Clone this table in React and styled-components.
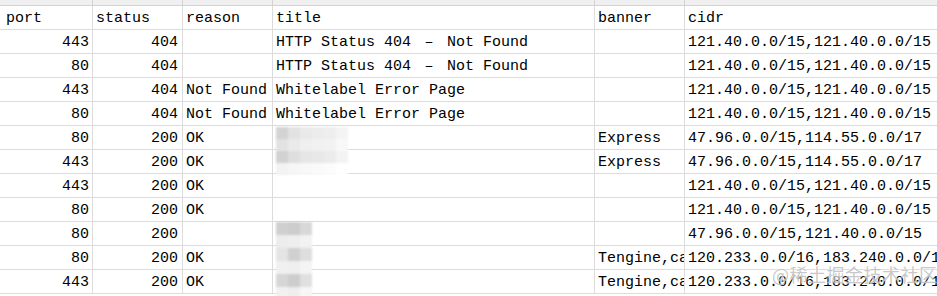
import React from 'react'
import styled, {createGlobalStyle} from 'styled-components'

const GlobalStyle = createGlobalStyle`
    html, body {
        margin: 0;
        padding: 0;
        background: #ffffff;
        overflow: hidden;
    }
`;

const Sheet = styled.div`
    position: relative;
    width: 937px;
    height: 296px;
    overflow: hidden;
    font-family: "Liberation Mono", "Noto Sans CJK SC", monospace;
    font-size: 15px;
    color: #000;
`;

const Row = styled.div`
    display: grid;
    grid-template-columns: 93px 90px 90px 322px 90px 1fr;
    height: ${props => props.strip ? '6px' : '24px'};
    background: ${props => props.strip ? '#f0f0f0' : '#fff'};
    border-bottom: 1px solid ${props => props.strip ? '#d2d2d2' : '#dcdcdc'};
    box-sizing: border-box;
`;

const Cell = styled.div`
    border-right: 1px solid ${props => props.strip ? '#d2d2d2' : '#dcdcdc'};
    padding: ${props => props.first ? '2px 3px 0 6px' : '2px 4px 0 3px'};
    line-height: 21px;
    text-align: ${props => props.num ? 'right' : 'left'};
    white-space: pre;
    overflow: hidden;
    &:last-child {
        border-right: none;
        overflow: visible;
    }
`;

const Dash = styled.span`
    display: inline-block;
    width: 18px;
    text-align: center;
`;

const Mosaic = styled.div`
    position: absolute;
    left: ${props => props.x}px;
    top: ${props => props.y}px;
    display: grid;
    grid-template-columns: repeat(${props => props.cols}, ${props => props.cw}px);
    grid-auto-rows: ${props => props.rh}px;
    filter: blur(1.2px);
`;

const Tile = styled.div`
    background: ${props => props.c};
`;

const Watermark = styled.div`
    position: absolute;
    left: 772px;
    top: 261px;
    font-family: "Noto Sans CJK SC", sans-serif;
    font-size: 18px;
    letter-spacing: 0.5px;
    color: rgba(130, 130, 130, 0.45);
    text-shadow: 0 0 1px rgba(255, 255, 255, 0.9), 0 0 2px rgba(255, 255, 255, 0.7);
    white-space: nowrap;
`;

const cidrA = '121.40.0.0/15,121.40.0.0/15'
const cidrB = '47.96.0.0/15,114.55.0.0/17'
const cidrC = '120.233.0.0/16,183.240.0.0/16'

const notFound = <>HTTP Status 404 <Dash>–</Dash> Not Found</>

const rows = [
    ['443', '404', '', notFound, '', cidrA],
    ['80', '404', '', notFound, '', cidrA],
    ['443', '404', 'Not Found', 'Whitelabel Error Page', '', cidrA],
    ['80', '404', 'Not Found', 'Whitelabel Error Page', '', cidrA],
    ['80', '200', 'OK', '', 'Express', cidrB],
    ['443', '200', 'OK', '', 'Express', cidrB],
    ['443', '200', 'OK', '', '', cidrA],
    ['80', '200', 'OK', '', '', cidrA],
    ['80', '200', '', '', '', '47.96.0.0/15,121.40.0.0/15'],
    ['80', '200', 'OK', '', 'Tengine,cache', cidrC],
    ['443', '200', 'OK', '', 'Tengine,cache', cidrC],
]

const mosaicTop = [
    '#d3d3d3', '#e2e2e2', '#e9e9e9', '#ececec', '#eeeeee', '#f4f4f4',
    '#e2e2e2', '#eaeaea', '#efefef', '#f1f1f1', '#f2f2f2', '#f8f8f8',
    '#d2d2d2', '#dedede', '#e6e6e6', '#e8e8e8', '#ebebeb', '#f3f3f3',
    '#f3f3f3', '#f6f6f6', '#f8f8f8', '#fafafa', '#fcfcfc', '#ffffff',
]

const mosaicBottom = [
    '#cfcfcf', '#cccccc', '#d8d8d8',
    '#ececec', '#eeeeee', '#f2f2f2',
    '#e4e4e4', '#d0d0d0', '#dedede',
    '#f0f0f0', '#efefef', '#f4f4f4',
    '#d6d6d6', '#cdcdcd', '#e0e0e0',
    '#f1f1f1', '#eeeeee', '#f6f6f6',
]

const App = () => {
    return (
        <Sheet>
            <GlobalStyle />
            <Row strip>
                {[0, 1, 2, 3, 4, 5].map(i => <Cell strip key={i} />)}
            </Row>
            <Row>
                <Cell first>port</Cell>
                <Cell>status</Cell>
                <Cell>reason</Cell>
                <Cell>title</Cell>
                <Cell>banner</Cell>
                <Cell>cidr</Cell>
            </Row>
            {rows.map((r, i) => (
                <Row key={i}>
                    <Cell first num>{r[0]}</Cell>
                    <Cell num>{r[1]}</Cell>
                    <Cell>{r[2]}</Cell>
                    <Cell>{r[3]}</Cell>
                    <Cell>{r[4]}</Cell>
                    <Cell>{r[5]}</Cell>
                </Row>
            ))}
            <Mosaic x={276} y={127} cols={6} cw={12} rh={12}>
                {mosaicTop.map((c, i) => <Tile key={i} c={c} />)}
            </Mosaic>
            <Mosaic x={276} y={222} cols={3} cw={12} rh={13}>
                {mosaicBottom.map((c, i) => <Tile key={i} c={c} />)}
            </Mosaic>
            <Watermark>@稀土掘金技术社区</Watermark>
        </Sheet>
    )
}

export default App
